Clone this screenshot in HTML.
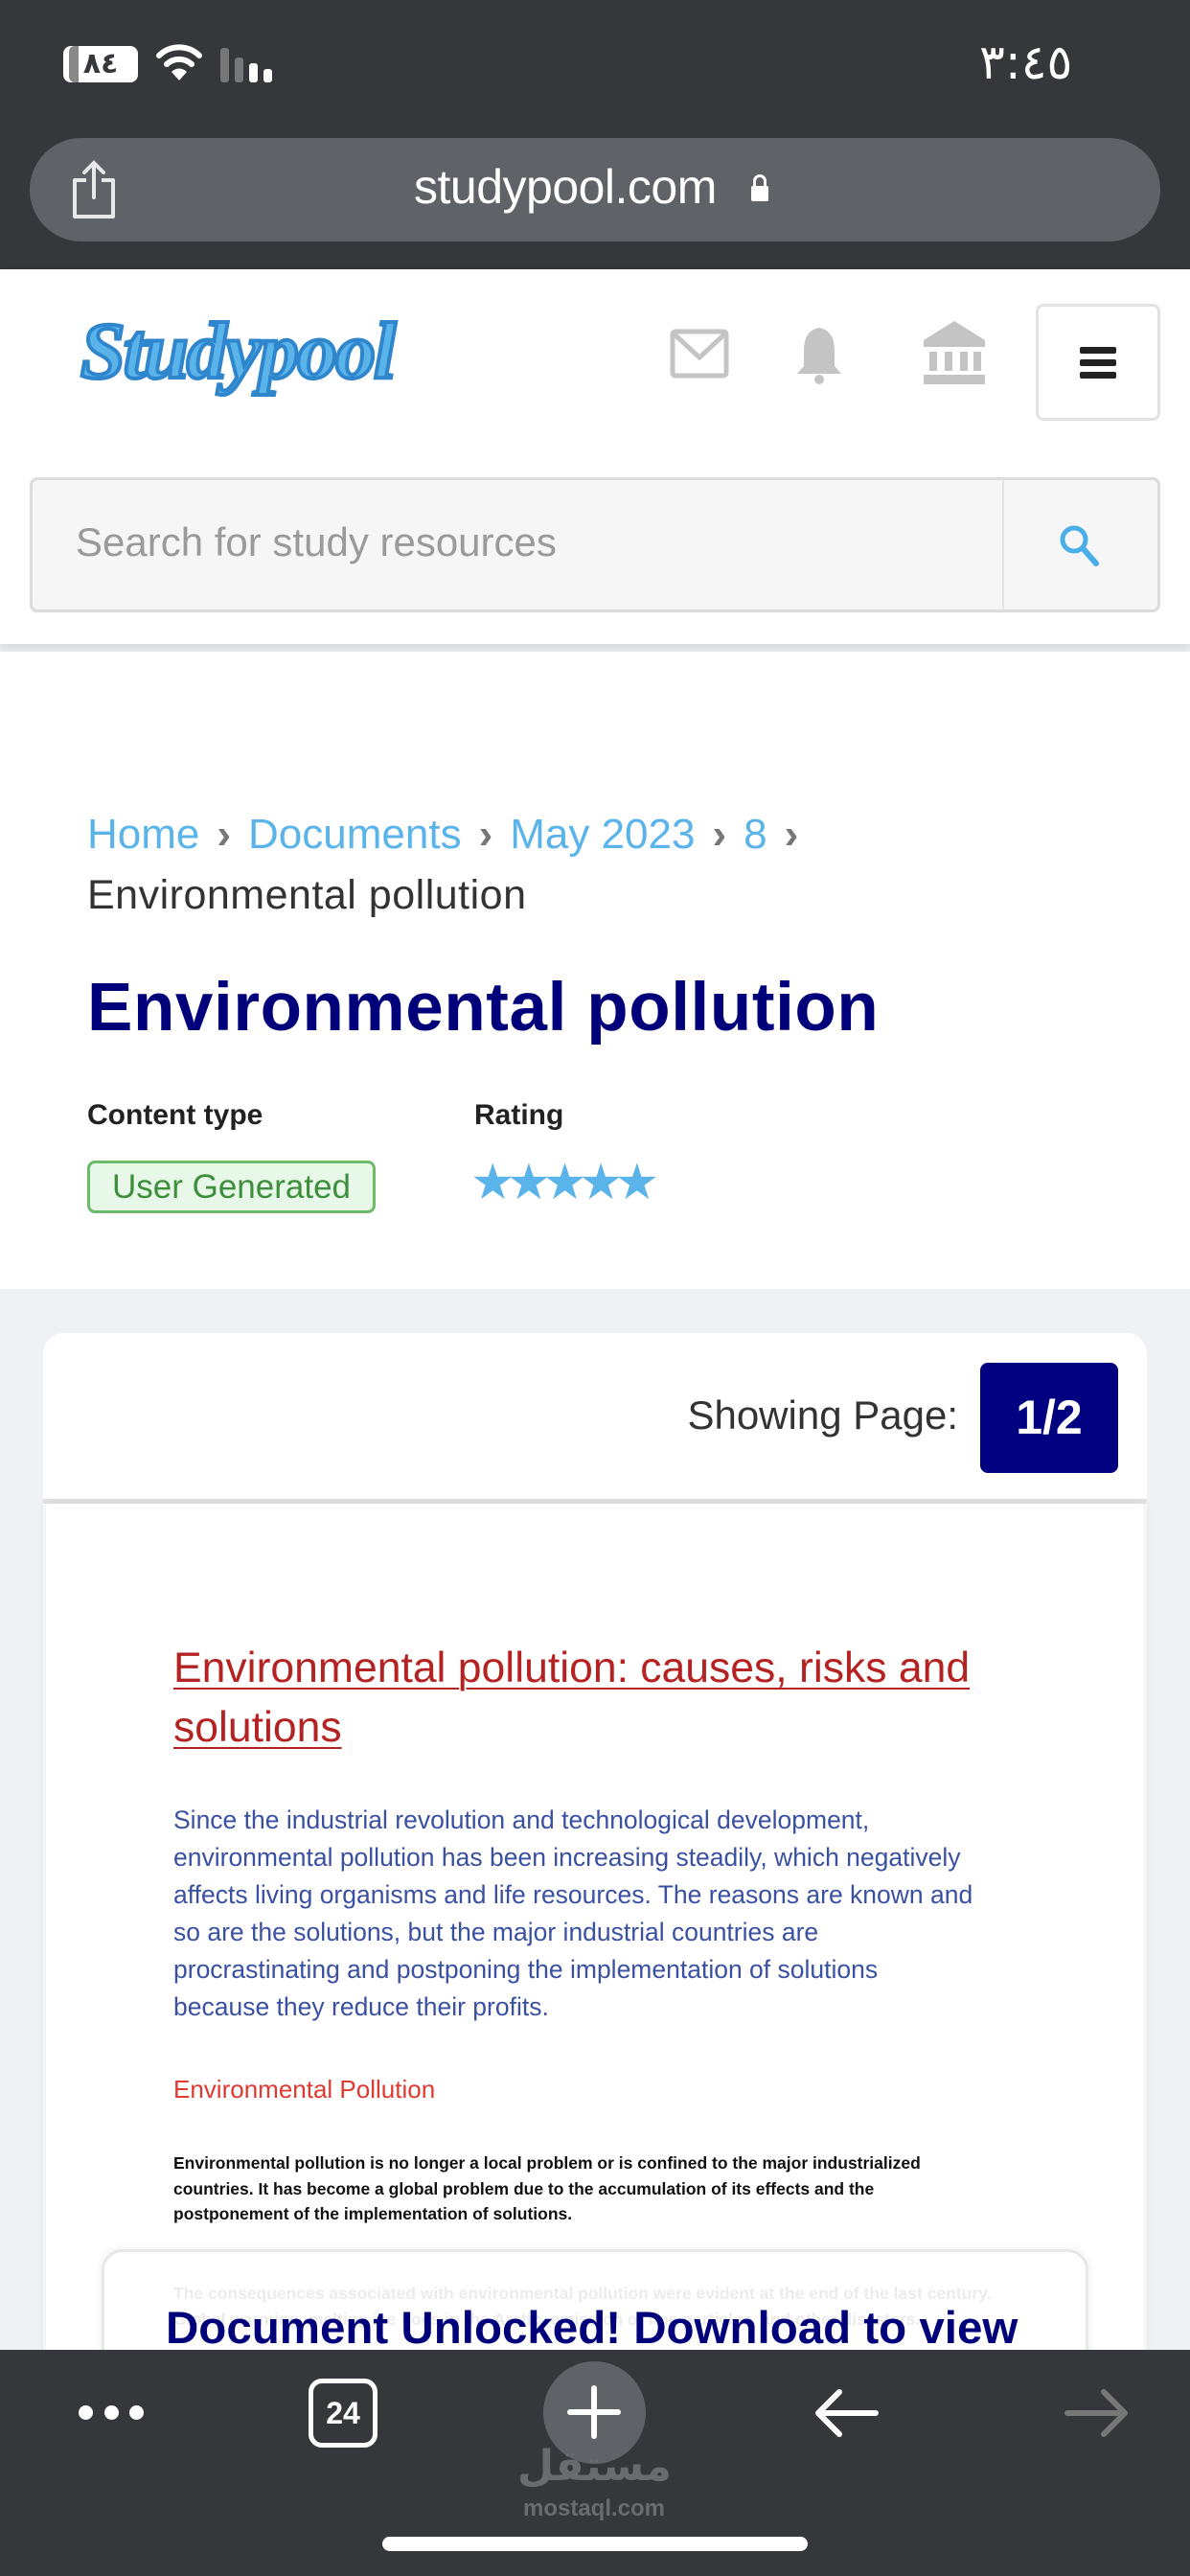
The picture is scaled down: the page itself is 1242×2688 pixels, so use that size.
<!DOCTYPE html>
<html><head><meta charset="utf-8"><style>
*{margin:0;padding:0;box-sizing:border-box}
body{width:1242px;height:2688px;position:relative;overflow:hidden;background:#eff1f5;font-family:"Liberation Sans","DejaVu Sans",sans-serif}
.a{position:absolute}
.c{color:#777;padding:0 18px;font-weight:bold}
</style></head><body>
<div class="a" style="left:0;top:0;width:1242px;height:281px;background:#36373a"></div>
<div class="a" style="left:1022px;top:36px;color:#fff;font-size:50px;font-family:'DejaVu Sans',sans-serif">٣:٤٥</div>
<div class="a" style="left:66px;top:48px;width:78px;height:38px;background:#fff;border-radius:8px;color:#36373a;font-size:30px;font-weight:bold;text-align:center;line-height:38px;font-family:'DejaVu Sans',sans-serif">٨٤</div>
<div class="a" style="left:72px;top:48px;width:10px;height:38px;background:#888;border-radius:6px 0 0 6px"></div>
<svg class="a" style="left:162px;top:44px" width="50" height="42" viewBox="0 0 50 42"><path d="M4 14 A30 30 0 0 1 46 14" stroke="#fff" stroke-width="6" fill="none" stroke-linecap="round"/><path d="M12 23 A19 19 0 0 1 38 23" stroke="#fff" stroke-width="6" fill="none" stroke-linecap="round"/><path d="M25 40 L17 31 A11 11 0 0 1 33 31 Z" fill="#fff"/></svg>
<div class="a" style="left:230px;top:50px;width:9px;height:36px;background:#777;border-radius:3px"></div>
<div class="a" style="left:245px;top:60px;width:9px;height:26px;background:#777;border-radius:3px"></div>
<div class="a" style="left:260px;top:66px;width:9px;height:20px;background:#fff;border-radius:3px"></div>
<div class="a" style="left:275px;top:72px;width:9px;height:14px;background:#fff;border-radius:3px"></div>
<div class="a" style="left:31px;top:144px;width:1180px;height:108px;background:#5f6267;border-radius:54px"></div>
<svg class="a" style="left:72px;top:166px" width="52" height="64" viewBox="0 0 52 64"><path d="M18 22 H6 V60 H46 V22 H34" stroke="#e8e8e8" stroke-width="4" fill="none" stroke-linejoin="round"/><path d="M26 4 V40 M16 14 L26 4 L36 14" stroke="#e8e8e8" stroke-width="4" fill="none" stroke-linecap="round"/></svg>
<div class="a" style="left:432px;top:166px;color:#fff;font-size:50px;letter-spacing:-0.5px">studypool.com</div>
<div class="a" style="left:784px;top:194px;width:18px;height:16px;background:#fff;border-radius:2px"></div>
<div class="a" style="left:786px;top:182px;width:14px;height:18px;border:3px solid #fff;border-radius:7px 7px 0 0"></div>
<div class="a" style="left:0;top:281px;width:1242px;height:391px;background:#fff;box-shadow:0 6px 10px rgba(0,0,0,0.1)"></div>
<div class="a" style="left:84px;top:318px;font-family:'Liberation Serif',serif;font-style:italic;font-weight:bold;font-size:84px;color:#5ab4ea;-webkit-text-stroke:4px #2f86cc;letter-spacing:-2px">Studypool</div>
<svg class="a" style="left:699px;top:343px" width="62" height="52" viewBox="0 0 62 52"><rect x="3" y="3" width="56" height="46" rx="3" stroke="#c4c4c4" stroke-width="5" fill="none"/><path d="M5 6 L31 30 L57 6" stroke="#c4c4c4" stroke-width="5" fill="none"/></svg>
<svg class="a" style="left:829px;top:338px" width="52" height="64" viewBox="0 0 52 64"><path d="M26 4 C14 6 10 16 10 28 V44 L3 52 H49 L42 44 V28 C42 16 38 6 26 4 Z" fill="#c4c4c4"/><circle cx="26" cy="58" r="5" fill="#c4c4c4"/></svg>
<svg class="a" style="left:964px;top:335px" width="64" height="66" viewBox="0 0 64 66"><path d="M32 0 L64 20 H0 Z" fill="#c4c4c4"/><rect x="0" y="20" width="64" height="7" fill="#c4c4c4"/><rect x="6" y="32" width="8" height="20" fill="#c4c4c4"/><rect x="22" y="32" width="8" height="20" fill="#c4c4c4"/><rect x="38" y="32" width="8" height="20" fill="#c4c4c4"/><rect x="52" y="32" width="8" height="20" fill="#c4c4c4"/><rect x="0" y="56" width="64" height="10" fill="#c4c4c4"/></svg>
<div class="a" style="left:1081px;top:317px;width:130px;height:122px;border:3px solid #e2e2e2;border-radius:8px"></div>
<div class="a" style="left:1127px;top:362px;width:38px;height:7px;background:#222;border-radius:2px"></div>
<div class="a" style="left:1127px;top:375px;width:38px;height:7px;background:#222;border-radius:2px"></div>
<div class="a" style="left:1127px;top:388px;width:38px;height:7px;background:#222;border-radius:2px"></div>
<div class="a" style="left:31px;top:498px;width:1180px;height:141px;background:#f6f6f6;border:3px solid #dcdcdc;border-radius:8px"></div>
<div class="a" style="left:1046px;top:500px;width:2px;height:137px;background:#e2e2e2"></div>
<div class="a" style="left:79px;top:542px;color:#9a9a9a;font-size:42px">Search for study resources</div>
<svg class="a" style="left:1104px;top:546px" width="44" height="46" viewBox="0 0 44 46"><circle cx="17" cy="17" r="12" stroke="#4aaee8" stroke-width="5" fill="none"/><path d="M26 26 L40 42" stroke="#4aaee8" stroke-width="6" stroke-linecap="round"/></svg>
<div class="a" style="left:0;top:680px;width:1242px;height:665px;background:#fff"></div>
<div class="a" style="left:91px;top:846px;font-size:44px;color:#5ab4ea;white-space:nowrap">Home<span class="c">›</span>Documents<span class="c">›</span>May 2023<span class="c">›</span>8<span class="c">›</span></div>
<div class="a" style="left:91px;top:910px;font-size:43px;color:#333;letter-spacing:0.5px">Environmental pollution</div>
<div class="a" style="left:91px;top:1011px;font-size:71px;font-weight:bold;color:#00007a;letter-spacing:0.6px">Environmental pollution</div>
<div class="a" style="left:91px;top:1147px;font-size:30px;font-weight:bold;color:#222">Content type</div>
<div class="a" style="left:495px;top:1147px;font-size:30px;font-weight:bold;color:#222">Rating</div>
<div class="a" style="left:91px;top:1211px;width:301px;height:55px;border:3px solid #6cbb6c;background:#e8f8e8;border-radius:8px;color:#3e8e3e;font-size:35px;text-align:center;line-height:49px">User Generated</div>
<div class="a" style="left:491px;top:1204px;font-size:52px;color:#5ab4ea;letter-spacing:-9px">★★★★★</div>
<div class="a" style="left:45px;top:1391px;width:1152px;height:1100px;background:#fff;border-radius:22px"></div>
<div class="a" style="left:700px;top:1453px;width:300px;text-align:right;font-size:42px;color:#333">Showing Page:</div>
<div class="a" style="left:1023px;top:1422px;width:144px;height:115px;background:#000080;border-radius:8px;color:#fff;font-size:50px;font-weight:bold;text-align:center;line-height:115px">1/2</div>
<div class="a" style="left:45px;top:1564px;width:1152px;height:5px;background:#e4e4e4"></div>
<div class="a" style="left:48px;top:1569px;width:1146px;height:900px;background:#fff;box-shadow:0 0 8px rgba(0,0,0,0.12)"></div>
<div class="a" style="left:181px;top:1710px;width:900px;font-size:44.5px;color:#b52222;line-height:62px;text-decoration:underline;text-decoration-thickness:2px;text-underline-offset:6px;white-space:nowrap">Environmental pollution: causes, risks and<br>solutions</div>
<div class="a" style="left:181px;top:1880px;width:900px;font-size:26.5px;color:#3a50a2;line-height:39px;white-space:nowrap">Since the industrial revolution and technological development,<br>environmental pollution has been increasing steadily, which negatively<br>affects living organisms and life resources. The reasons are known and<br>so are the solutions, but the major industrial countries are<br>procrastinating and postponing the implementation of solutions<br>because they reduce their profits.</div>
<div class="a" style="left:181px;top:2165px;font-size:26px;color:#e03a30">Environmental Pollution</div>
<div class="a" style="left:181px;top:2244px;width:830px;font-size:17.5px;font-weight:bold;color:#111;line-height:26.5px">Environmental pollution is no longer a local problem or is confined to the major industrialized countries. It has become a global problem due to the accumulation of its effects and the postponement of the implementation of solutions.</div>
<div class="a" style="left:106px;top:2347px;width:1030px;height:200px;background:#fff;border:3px solid #e8e8e8;border-radius:22px;box-shadow:0 0 10px rgba(0,0,0,0.08)"></div>
<div class="a" style="left:181px;top:2380px;width:860px;font-size:17.5px;font-weight:bold;color:#ececec;line-height:26.5px">The consequences associated with environmental pollution were evident at the end of the last century. Global warming, melting ice floes in the Arctic, emission of fine particles, and other disasters.</div>
<div class="a" style="left:173px;top:2402px;font-size:47.5px;font-weight:bold;color:#00007a;white-space:nowrap">Document Unlocked! Download to view</div>
<div class="a" style="left:0;top:2452px;width:1242px;height:236px;background:#36373a"></div>
<div class="a" style="left:82px;top:2510px;width:15px;height:15px;background:#fff;border-radius:50%"></div>
<div class="a" style="left:109px;top:2510px;width:15px;height:15px;background:#fff;border-radius:50%"></div>
<div class="a" style="left:135px;top:2510px;width:15px;height:15px;background:#fff;border-radius:50%"></div>
<div class="a" style="left:322px;top:2482px;width:72px;height:72px;border:5px solid #fff;border-radius:14px;color:#fff;font-size:32px;font-weight:bold;text-align:center;line-height:62px">24</div>
<div class="a" style="left:567px;top:2464px;width:107px;height:107px;background:#5f6267;border-radius:50%"></div>
<div class="a" style="left:592px;top:2514px;width:56px;height:6px;background:#fff;border-radius:3px"></div>
<div class="a" style="left:617px;top:2489px;width:6px;height:56px;background:#fff;border-radius:3px"></div>
<svg class="a" style="left:848px;top:2490px" width="70" height="56" viewBox="0 0 70 56"><path d="M66 28 H6 M28 6 L6 28 L28 50" stroke="#fff" stroke-width="6" fill="none" stroke-linecap="round" stroke-linejoin="round"/></svg>
<svg class="a" style="left:1110px;top:2490px" width="70" height="56" viewBox="0 0 70 56"><path d="M4 28 H64 M42 6 L64 28 L42 50" stroke="#777" stroke-width="6" fill="none" stroke-linecap="round" stroke-linejoin="round"/></svg>
<div class="a" style="left:540px;top:2548px;width:160px;text-align:center;font-family:'DejaVu Sans',sans-serif;font-size:44px;font-weight:bold;color:#6a6b6e">مستقل</div>
<div class="a" style="left:520px;top:2604px;width:200px;text-align:center;font-size:24px;font-weight:bold;color:#6a6b6e">mostaql.com</div>
<div class="a" style="left:399px;top:2647px;width:444px;height:15px;background:#fff;border-radius:8px"></div>
</body></html>
